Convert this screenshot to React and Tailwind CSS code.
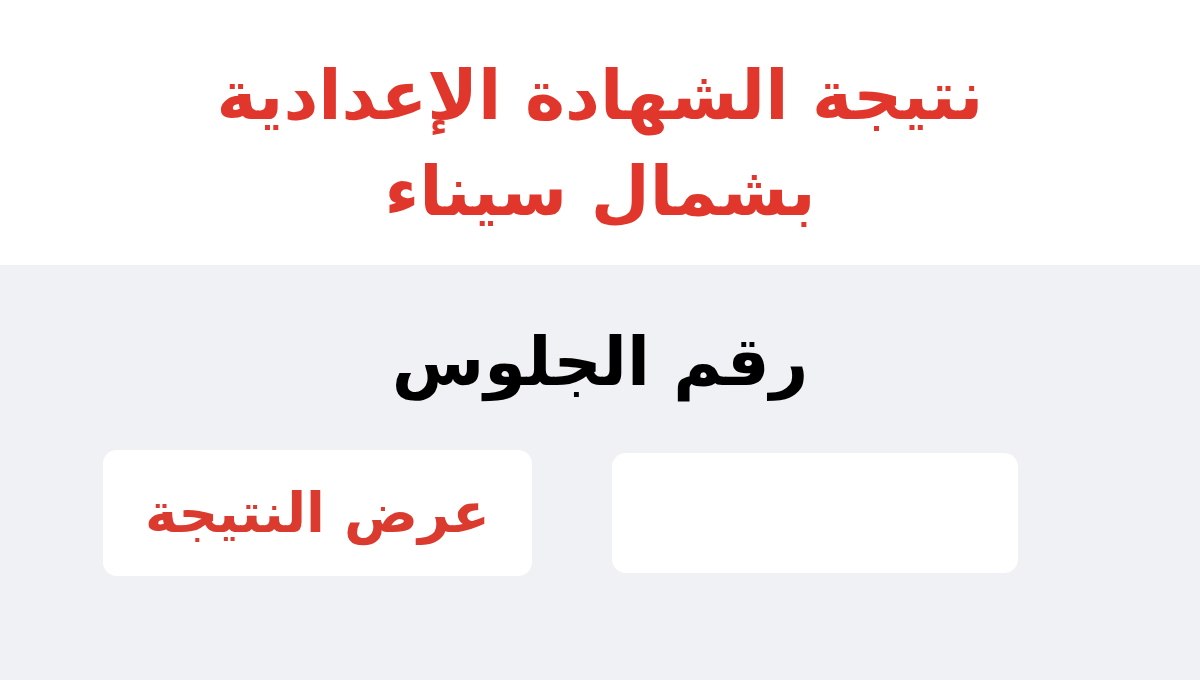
export default function App() {
  return (
    <div dir="rtl" className="w-[1200px] h-[680px] flex flex-col bg-[#eff1f4] font-['DejaVu_Sans',sans-serif]">
      <header className="h-[265px] bg-white flex flex-col items-center justify-center pt-[22px]">
        <h1 className="text-[68px] leading-[96px] font-bold text-[#e0362b] text-center">
          نتيجة الشهادة الإعدادية
          <br />
          بشمال سيناء
        </h1>
      </header>

      <main className="flex flex-col items-center pt-[42px]">
        <h2 className="text-[67px] leading-[110px] font-bold text-black">رقم الجلوس</h2>

        <div className="w-full flex items-center gap-[80px] pr-[182px] pl-[103px] mt-[33px]">
          <input
            type="text"
            className="w-[406px] h-[120px] bg-white rounded-[14px] outline-none"
          />
          <button className="w-[429px] h-[126px] bg-white rounded-[14px] text-[55px] font-bold text-[#db3a2f]">
            عرض النتيجة
          </button>
        </div>
      </main>
    </div>
  );
}
